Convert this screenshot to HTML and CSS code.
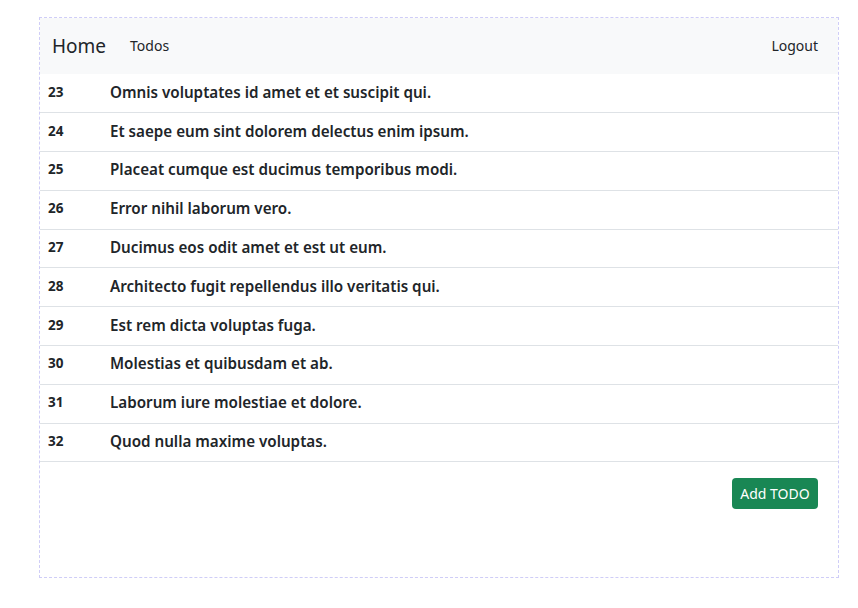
FILE: index.html
```html
<!DOCTYPE html>
<html>
<head>
<meta charset="utf-8">
<link rel="stylesheet" href="styles.css">
</head>
<body>
<div class="frame">
  <nav class="navbar">
    <a class="brand" href="#">Home</a>
    <a class="nav-link" href="#">Todos</a>
    <span class="spacer"></span>
    <a class="nav-link" href="#">Logout</a>
  </nav>
  <table class="todos">
    <tbody>
      <tr><th>23</th><td>Omnis voluptates id amet et et suscipit qui.</td></tr>
      <tr><th>24</th><td>Et saepe eum sint dolorem delectus enim ipsum.</td></tr>
      <tr><th>25</th><td>Placeat cumque est ducimus temporibus modi.</td></tr>
      <tr><th>26</th><td>Error nihil laborum vero.</td></tr>
      <tr><th>27</th><td>Ducimus eos odit amet et est ut eum.</td></tr>
      <tr><th>28</th><td>Architecto fugit repellendus illo veritatis qui.</td></tr>
      <tr><th>29</th><td>Est rem dicta voluptas fuga.</td></tr>
      <tr><th>30</th><td>Molestias et quibusdam et ab.</td></tr>
      <tr><th>31</th><td>Laborum iure molestiae et dolore.</td></tr>
      <tr><th>32</th><td>Quod nulla maxime voluptas.</td></tr>
    </tbody>
  </table>
  <div class="actions">
    <button class="btn-add" type="button">Add TODO</button>
  </div>
</div>
</body>
</html>
```
FILE: styles.css
```css
html, body {
  margin: 0;
  padding: 0;
  background: #fff;
}
body {
  font-family: "Noto Sans", "DejaVu Sans", sans-serif;
  color: #212529;
  padding: 17px 0 0 39px;
}
.frame {
  width: 798px;
  height: 559px;
  border: 1px dashed #cfcdf7;
  display: flex;
  flex-direction: column;
}
.navbar {
  height: 56px;
  background: #f8f9fa;
  display: flex;
  align-items: center;
  padding: 0 12px;
}
.brand {
  font-size: 19px;
  color: #212529;
  text-decoration: none;
  margin-right: 16px;
  line-height: 1;
}
.nav-link {
  font-size: 14px;
  color: #212529;
  text-decoration: none;
  padding: 0 8px 2px;
}
.spacer { flex: 1; }
.todos {
  width: 100%;
  border-collapse: collapse;
}
.todos tr {
  height: 38.8px;
  border-bottom: 1px solid #dee2e6;
}
.todos th {
  width: 46px;
  text-align: left;
  font-size: 13.5px;
  font-weight: 700;
  padding: 0 8px 3px;
}
.todos td {
  font-size: 15.2px;
  font-weight: 600;
  padding: 0 8px 3px;
}
.actions {
  display: flex;
  justify-content: flex-end;
  padding: 16px 20px 0 0;
}
.btn-add {
  background: #198754;
  color: #fff;
  border: none;
  border-radius: 4px;
  font-family: inherit;
  font-size: 14px;
  height: 31px;
  width: 86px;
  padding: 0 0 1px;
}
```
